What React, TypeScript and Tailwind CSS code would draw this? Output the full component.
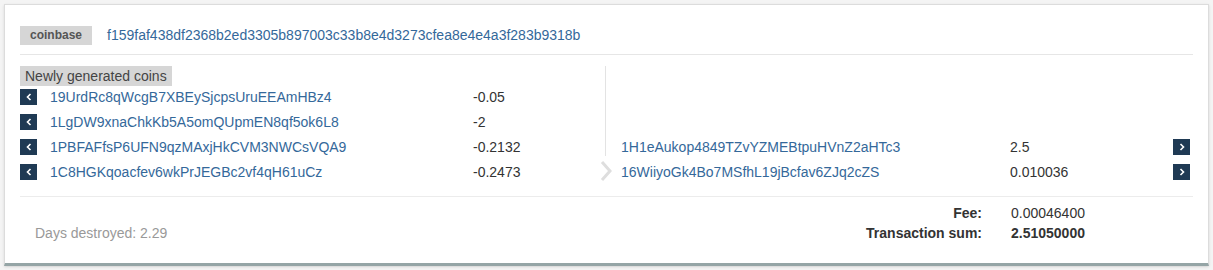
const inputs = [
  { addr: "19UrdRc8qWcgB7XBEySjcpsUruEEAmHBz4", amount: "-0.05" },
  { addr: "1LgDW9xnaChkKb5A5omQUpmEN8qf5ok6L8", amount: "-2" },
  { addr: "1PBFAFfsP6UFN9qzMAxjHkCVM3NWCsVQA9", amount: "-0.2132" },
  { addr: "1C8HGKqoacfev6wkPrJEGBc2vf4qH61uCz", amount: "-0.2473" },
];

const outputs = [
  { addr: "1H1eAukop4849TZvYZMEBtpuHVnZ2aHTc3", amount: "2.5" },
  { addr: "16WiiyoGk4Bo7MSfhL19jBcfav6ZJq2cZS", amount: "0.010036" },
];

const Arrow = ({ dir }: { dir: "left" | "right" }) => (
  <span className="flex h-4 w-[17px] shrink-0 items-center justify-center bg-[#1f3a54]">
    <svg width="6" height="8" viewBox="0 0 6 8" fill="none">
      {dir === "left" ? (
        <path d="M4.5 1 L1.5 4 L4.5 7" stroke="white" strokeWidth="1.6" />
      ) : (
        <path d="M1.5 1 L4.5 4 L1.5 7" stroke="white" strokeWidth="1.6" />
      )}
    </svg>
  </span>
);

const App = () => {
  return (
    <div className="h-[270px] bg-[#f4f4f4] p-1 font-['Liberation_Sans',Arial,sans-serif] text-sm text-[#333]">
      <div className="border border-[#dcdcdc] border-b-[3px] border-b-[#95a5a6] bg-white px-[15px] pt-5 pb-5 shadow-sm">
        <div className="flex h-5 items-center">
          <span className="flex h-[19px] items-center bg-[#d6d6d6] px-[10px] text-xs font-bold text-[#555]">
            coinbase
          </span>
          <a className="ml-[15px] text-[#34689a]" href="#">
            f159faf438df2368b2ed3305b897003c33b8e4d3273cfea8e4e4a3f283b9318b
          </a>
        </div>

        <hr className="mt-[9px] border-[#e6e6e6]" />

        <div className="mt-[11px] flex">
          <div className="w-[585px]">
            <div className="flex h-5 w-fit items-center whitespace-nowrap bg-[#d6d6d6] px-[5px] text-[#444]">
              Newly generated coins
            </div>
            <ul className="-mt-[2px]">
              {inputs.map(({ addr, amount }) => (
                <li className="flex h-[25px] items-center" key={addr}>
                  <Arrow dir="left" />
                  <a className="ml-[13px] w-[423px] text-[#34689a]" href="#">
                    {addr}
                  </a>
                  <span>{amount}</span>
                </li>
              ))}
            </ul>
          </div>

          <div className="relative flex w-[585px] flex-col justify-end border-l border-[#e3e3e3]">
            <div className="absolute -left-[8px] top-[90px] flex h-[30px] w-[16px] items-center justify-center bg-white">
              <svg width="12" height="22" viewBox="0 0 12 22" fill="none">
                <path d="M2 2 L10 11 L2 20" stroke="#dedede" strokeWidth="3" />
              </svg>
            </div>
            <ul>
              {outputs.map(({ addr, amount }) => (
                <li className="flex h-[25px] items-center pl-[15px]" key={addr}>
                  <a className="w-[389px] text-[#34689a]" href="#">
                    {addr}
                  </a>
                  <span>{amount}</span>
                  <span className="ml-auto">
                    <Arrow dir="right" />
                  </span>
                </li>
              ))}
            </ul>
          </div>
        </div>

        <hr className="mt-[12px] border-[#ececec]" />

        <div className="mt-[6px] flex items-end justify-between">
          <p className="pl-[15px] leading-5 text-[#999]">Days destroyed: 2.29</p>
          <div className="grid grid-cols-[auto_182px] gap-x-[29px] leading-5">
            <span className="text-right font-bold">Fee:</span>
            <span>0.00046400</span>
            <span className="text-right font-bold">Transaction sum:</span>
            <span className="font-bold">2.51050000</span>
          </div>
        </div>
      </div>
    </div>
  );
};

export default App;
